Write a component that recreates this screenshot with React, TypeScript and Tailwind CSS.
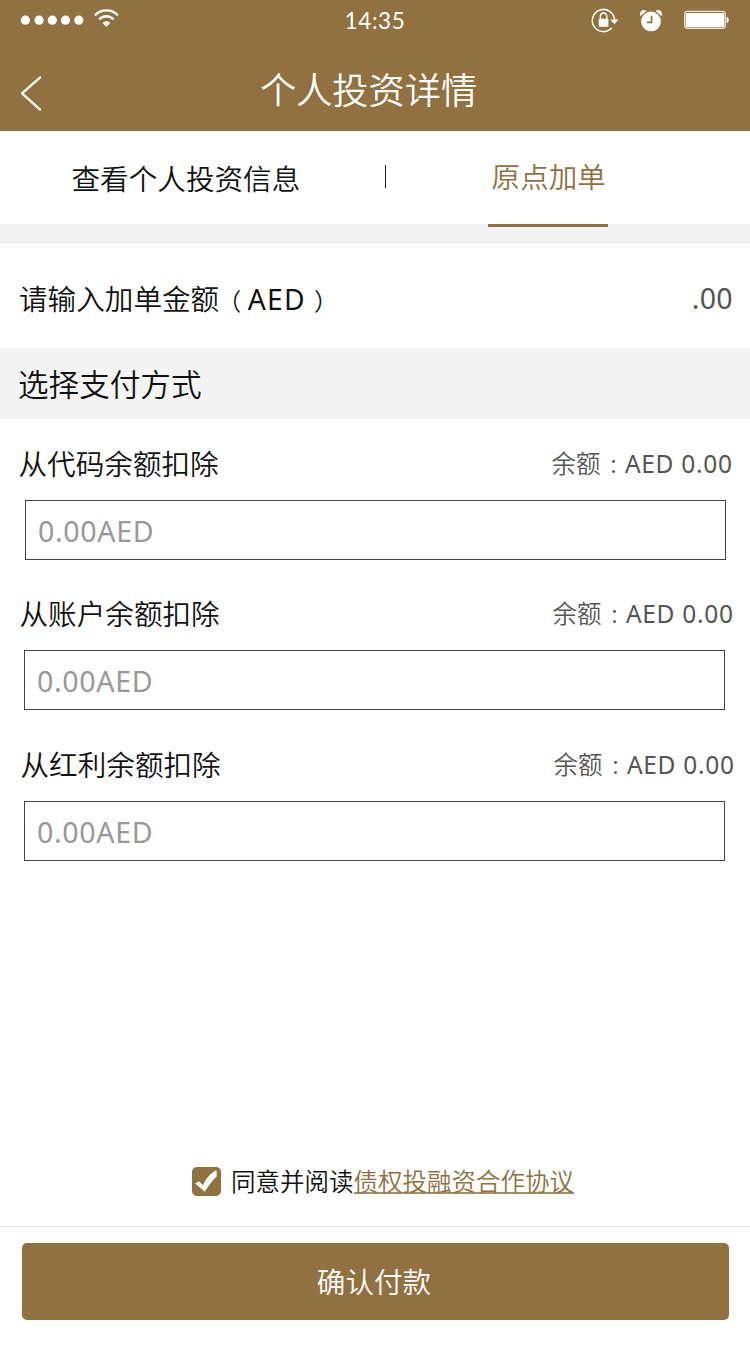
import React, { useState } from "react";

type Source = {
  label: string;
  rowClass: string;
  inputClass: string;
};

const sources: Source[] = [
  { label: "从代码余额扣除", rowClass: "pl-[18.5px] pr-[18px]", inputClass: "ml-[25px] mb-[33px]" },
  { label: "从账户余额扣除", rowClass: "pl-[19.5px] pr-[17px]", inputClass: "ml-[24px] mb-[34px]" },
  { label: "从红利余额扣除", rowClass: "pl-[20.5px] pr-[16px]", inputClass: "ml-[24px]" },
];

function StatusBar() {
  return (
    <div className="flex h-10 items-center text-white">
      <div className="flex flex-1 items-center pl-5">
        <svg width="64" height="12" viewBox="0 0 64 12" fill="currentColor">
          <circle cx="5.4" cy="6.2" r="4.6" />
          <circle cx="19.1" cy="6.2" r="4.6" />
          <circle cx="32.3" cy="6.2" r="4.6" />
          <circle cx="45.5" cy="6.2" r="4.6" />
          <circle cx="58.8" cy="6.2" r="4.6" />
        </svg>
        <svg className="ml-[9px] -mt-1" width="27" height="20" viewBox="0 0 27 20" fill="none" stroke="currentColor" strokeWidth="2.3">
          <path d="M1.9 7.4C8 .8 18.8.8 24.8 7.4" />
          <path d="M6.1 11.4C10 7.2 16.8 7.2 20.6 11.4" />
          <path d="M9.5 14.9C11.6 12.6 15.2 12.6 17.2 14.9L13.35 18.9Z" fill="currentColor" stroke="none" />
        </svg>
      </div>
      <div className="h-10 w-[62px] whitespace-nowrap text-center font-[Lato] text-[22.5px] font-normal leading-[41px] tracking-[0.6px]">14:35</div>
      <div className="flex flex-1 items-center justify-end pr-5">
        <svg width="30" height="26" viewBox="0 0 30 26" fill="none" stroke="currentColor">
          <path d="M21.8 20.8A11.1 11.1 0 1 1 24.5 13" strokeWidth="1.5" />
          <path d="M20.2 12.6H28.6L24.4 17.3Z" fill="currentColor" stroke="none" />
          <rect x="8.8" y="11.7" width="9.6" height="8" rx=".6" fill="currentColor" stroke="none" />
          <path d="M10.4 12V9.3a3.2 3.2 0 0 1 6.4 0V12" strokeWidth="1.5" />
        </svg>
        <svg className="ml-[19px]" width="24" height="26" viewBox="0 0 24 26" fill="currentColor">
          <circle cx="12" cy="14.4" r="9.9" />
          <path d="M1.2 9.3C-.2 5 3.5 1.4 7.4 3.9Z" />
          <path d="M22.8 9.3C24.2 5 20.5 1.4 16.6 3.9Z" />
          <path d="M12.5 8.8V15.4H7.8" fill="none" stroke="#91713f" strokeWidth="1.7" />
        </svg>
        <svg className="ml-[21px]" width="46" height="20" viewBox="0 0 46 20">
          <rect x=".7" y="1.3" width="40.5" height="17" rx="2.5" fill="none" stroke="white" strokeOpacity=".8" strokeWidth="1.3" />
          <rect x="1.7" y="3" width="38.5" height="14.3" rx="1" fill="white" />
          <path d="M42.5 7c3 .4 3 5.6 0 6Z" fill="white" />
        </svg>
      </div>
    </div>
  );
}

export default function App() {
  const [agreed, setAgreed] = useState(true);

  return (
    <div className="flex h-[1346px] w-[750px] flex-col bg-white font-['Noto_Sans','Noto_Sans_CJK_SC',sans-serif] text-[28.6px] font-[350] text-[#111]">
      <header className="h-[131px] shrink-0 bg-[#91713f] text-white">
        <StatusBar />
        <div className="flex h-[91px] items-start">
          <button aria-label="返回" className="ml-[19px] mt-[35px]">
            <svg width="24" height="37" viewBox="0 0 24 37" fill="none" stroke="currentColor" strokeWidth="2.3" strokeLinecap="round" strokeLinejoin="round">
              <path d="M21.2 2.3L3 18.3L21.2 34.6" />
            </svg>
          </button>
          <h1 className="ml-[217px] mt-[22px] font-['Noto_Sans_CJK_SC',sans-serif] text-[36.2px] leading-[52px]">个人投资详情</h1>
        </div>
      </header>

      <nav className="flex h-24 shrink-0 items-start bg-[linear-gradient(#fff_93px,#f3f3f3_93px)]">
        <button className="ml-[71.5px] mr-[-0.5px] mt-[26px] whitespace-nowrap leading-[44px]">查看个人投资信息</button>
        <span className="ml-[85px] mt-[34px] h-[23px] w-px bg-[#222]" />
        <button className="ml-[102px] h-24 w-[120px] whitespace-nowrap border-b-3 border-[#91713f] pl-[2px] text-[#91713f]">原点加单</button>
      </nav>
      <div className="h-4 shrink-0 border-b border-[#e2e2e2] bg-[#f3f3f3]" />

      <label className="flex h-[105px] shrink-0 items-center justify-between pl-[19px] pr-[17px] pt-[8px]">
        <span className="whitespace-nowrap">
          请输入加单金额
          <span className="ml-[-2px] mr-[6.6px] text-[24px]">（</span>
          <span className="text-[28.2px] font-normal tracking-[1.3px]">AED</span>
          <span className="ml-[8px] text-[24px]">）</span>
        </span>
        <span className="-mt-[3px] font-normal tracking-[0.3px] text-[#555]">.00</span>
      </label>

      <h2 className="h-[71px] shrink-0 bg-[#f4f4f4] pl-[18px] text-[30.6px] leading-[73px]">选择支付方式</h2>

      <section className="pt-[24px]">
        {sources.map((s) => (
          <div key={s.label}>
            <div className={`flex h-[57px] items-start justify-between leading-[42px] ${s.rowClass}`}>
              <span>{s.label}</span>
              <span className="whitespace-nowrap text-[24.5px] text-[#555]">
                余额<span className="ml-[8px] mr-[-3.5px] text-[20px]">：</span>
                <span className="-mr-[0.7px] font-normal tracking-[0.7px]">AED 0.00</span>
              </span>
            </div>
            <input
              aria-label={s.label}
              placeholder="0.00AED"
              className={`block h-[60px] w-[701px] border border-[#444] bg-white pl-3 font-normal tracking-[0.65px] placeholder:text-[#999] placeholder:opacity-100 ${s.inputClass}`}
            />
          </div>
        ))}
      </section>

      <div className="mt-auto flex h-[63px] shrink-0 items-start pl-[192px] text-[24.5px]">
        <button
          role="checkbox"
          aria-checked={agreed}
          aria-label="同意"
          onClick={() => setAgreed(!agreed)}
          className="mt-[4px] size-[29px] rounded-[5px] bg-[#91713f]"
        >
          {agreed && (
            <svg width="29" height="29" viewBox="0 0 29 29" fill="white">
              <path d="M3.2 16.4L7 14.3L11 18.2C14.2 11.5 18 6.5 24.4 3L24.8 9.3C20.5 13.5 16.5 18.5 12.8 24.8Z" />
            </svg>
          )}
        </button>
        <span className="ml-[10px] whitespace-nowrap leading-[37px]">
          同意并阅读<a className="inline-block h-[31px] border-b-2 border-[#a88e66] leading-[37px] text-[#91713f]">债权投融资合作协议</a>
        </span>
      </div>

      <footer className="h-[120px] shrink-0 border-t border-[#e2e2e2] px-[22px] pt-4">
        <button className="h-[77px] w-[707px] rounded-[5px] bg-[#91713f] pr-[3px] pt-[2px] text-white">确认付款</button>
      </footer>
    </div>
  );
}
